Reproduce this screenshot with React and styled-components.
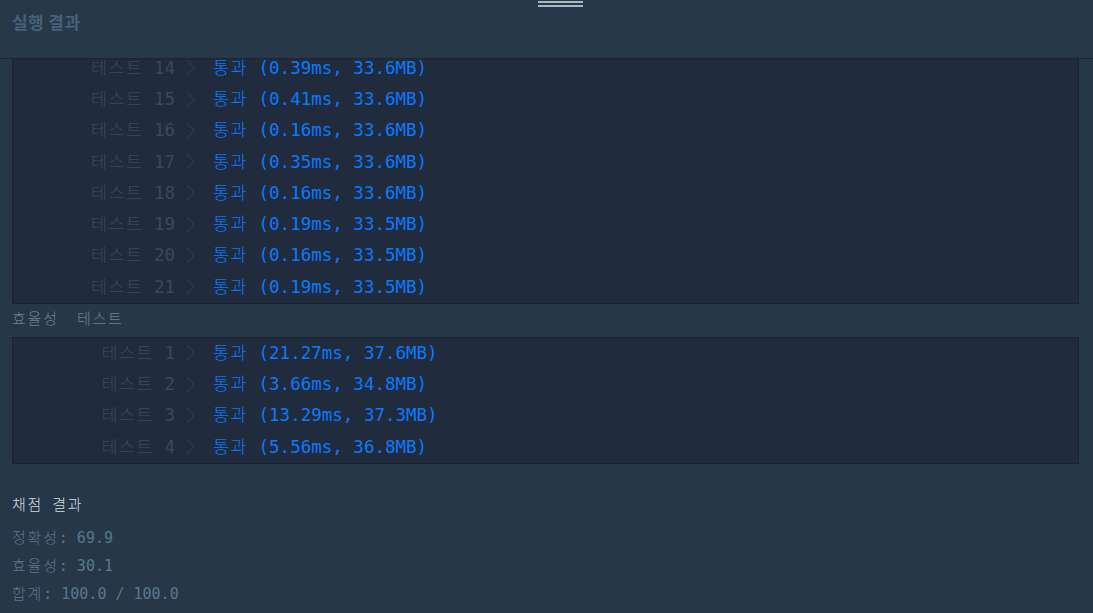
import React, { useEffect, useRef } from 'react';
import styled, { createGlobalStyle } from 'styled-components';

const accuracy = [
  ['0.12ms', '33.4MB'], ['0.15ms', '33.5MB'], ['0.21ms', '33.6MB'], ['0.18ms', '33.5MB'],
  ['0.14ms', '33.4MB'], ['0.33ms', '33.6MB'], ['0.16ms', '33.5MB'], ['0.27ms', '33.6MB'],
  ['0.19ms', '33.5MB'], ['0.22ms', '33.4MB'], ['0.17ms', '33.6MB'], ['0.25ms', '33.5MB'],
  ['0.18ms', '33.6MB'], ['0.39ms', '33.6MB'], ['0.41ms', '33.6MB'], ['0.16ms', '33.6MB'],
  ['0.35ms', '33.6MB'], ['0.16ms', '33.6MB'], ['0.19ms', '33.5MB'], ['0.16ms', '33.5MB'],
  ['0.19ms', '33.5MB'],
];

const efficiency = [
  ['21.27ms', '37.6MB'], ['3.66ms', '34.8MB'], ['13.29ms', '37.3MB'], ['5.56ms', '36.8MB'],
];

const GlobalStyle = createGlobalStyle`
  html, body {
    margin: 0;
    padding: 0;
    height: 100%;
    background: #263747;
  }
  #root {
    height: 100%;
  }
`;

const Page = styled.div`
  position: relative;
  height: 613px;
  display: flex;
  flex-direction: column;
  background: #263747;
  font-family: "DejaVu Sans Mono", "Noto Sans CJK KR", monospace;
  overflow: hidden;
`;

const Header = styled.div`
  box-sizing: border-box;
  height: 59px;
  flex: none;
  padding: 9px 12px 0;
  background: #273848;
  border-bottom: 1px solid #1b2634;
`;

const HeaderTitle = styled.h2`
  margin: 0;
  font-family: "Noto Sans CJK KR", "Noto Sans", sans-serif;
  font-size: 17px;
  line-height: 26px;
  letter-spacing: 0.4px;
  font-weight: 700;
  color: #48607a;
`;

const Handle = styled.div`
  position: absolute;
  top: 1px;
  left: 538px;
  width: 45px;
  height: 6px;
  border-top: 2px solid #aab8c2;
  border-bottom: 2px solid #aab8c2;
  box-sizing: border-box;
`;

const Body = styled.div`
  flex: 1;
  overflow-y: auto;
  padding: 0 14px 5px 12px;
  scrollbar-width: none;
  &::-webkit-scrollbar {
    display: none;
  }
`;

// hangul in the reference sits on a full-width cell, a touch wider than Noto's
const Ko = styled.span`
  font-family: "Noto Sans CJK KR", sans-serif;
  font-weight: 300;
  line-height: 1;
  letter-spacing: ${p => (p.$wide ? '0.12em' : '0.08em')};
`;

const SectionLabel = styled.div`
  height: 33px;
  line-height: 31px;
  font-size: 15px;
  color: #6c8396;
  white-space: pre;
`;

const Panel = styled.div`
  background: #202b3d;
  border: 1px solid #172232;
`;

const Row = styled.div`
  box-sizing: border-box;
  display: flex;
  align-items: center;
  height: 31.25px;
  padding-bottom: 2px;
  font-size: 17.5px;
  white-space: pre;
`;

const Label = styled.span`
  width: 162px;
  flex: none;
  text-align: right;
  color: #3a495a;
`;

const Chevron = styled.svg`
  flex: none;
  margin: 0 18px 0 11px;
`;

const Result = styled.span`
  color: #0a7afd;
`;

const Heading = styled.div`
  margin-top: 27px;
  margin-bottom: 5px;
  font-size: 15px;
  line-height: 28px;
  color: #d3dae2;
  white-space: pre;
`;

const ScoreLine = styled.div`
  font-size: 15px;
  line-height: 28px;
  color: #5a788f;
  white-space: pre;
`;

const TestRow = ({ index, time, memory }) => (
  <Row>
    <Label><Ko>테스트</Ko>{` ${index}`}</Label>
    <Chevron width="9" height="17" viewBox="0 0 9 17">
      <polyline points="1,1 8,8.5 1,16" fill="none" stroke="#2e3b4c" strokeWidth="1.2" />
    </Chevron>
    <Result><Ko>통과</Ko>{` (${time}, ${memory})`}</Result>
  </Row>
);

const App = () => {
  const bodyRef = useRef(null);

  useEffect(() => {
    const el = bodyRef.current;
    const toBottom = () => {
      if (el) el.scrollTop = el.scrollHeight;
    };
    toBottom();
    const id = requestAnimationFrame(toBottom);
    return () => cancelAnimationFrame(id);
  }, []);

  return (
    <Page>
      <GlobalStyle />
      <Header>
        <HeaderTitle>실행 결과</HeaderTitle>
      </Header>
      <Handle />
      <Body ref={bodyRef}>
        <SectionLabel><Ko $wide>정확성</Ko>{'  '}<Ko $wide>테스트</Ko></SectionLabel>
        <Panel>
          {accuracy.map(([time, memory], i) => (
            <TestRow key={i} index={i + 1} time={time} memory={memory} />
          ))}
        </Panel>
        <SectionLabel><Ko $wide>효율성</Ko>{'  '}<Ko $wide>테스트</Ko></SectionLabel>
        <Panel>
          {efficiency.map(([time, memory], i) => (
            <TestRow key={i} index={i + 1} time={time} memory={memory} />
          ))}
        </Panel>
        <Heading><Ko $wide>채점</Ko> <Ko $wide>결과</Ko></Heading>
        <ScoreLine><Ko $wide>정확성</Ko>: 69.9</ScoreLine>
        <ScoreLine><Ko $wide>효율성</Ko>: 30.1</ScoreLine>
        <ScoreLine><Ko $wide>합계</Ko>: 100.0 / 100.0</ScoreLine>
      </Body>
    </Page>
  );
};

export default App;
